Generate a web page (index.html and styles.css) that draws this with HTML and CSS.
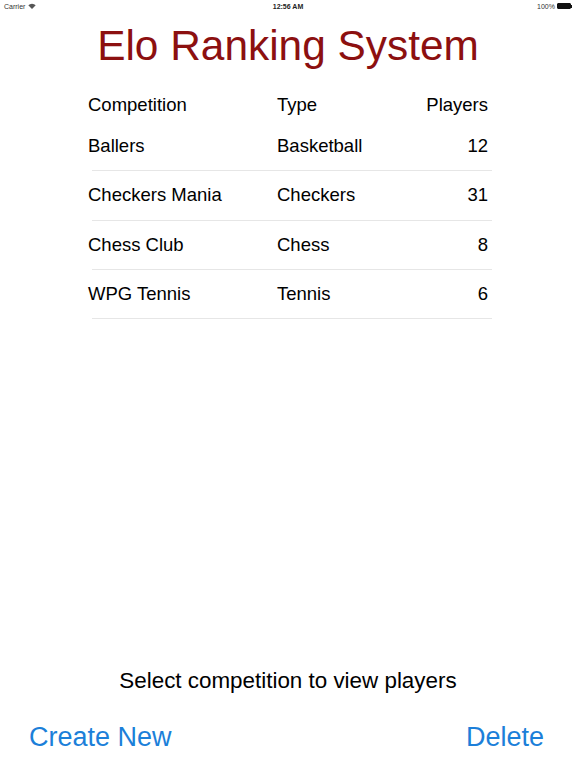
FILE: index.html
```html
<!DOCTYPE html>
<html>
<head>
<meta charset="utf-8">
<link rel="stylesheet" href="styles.css">
</head>
<body>
<div class="screen">
  <div class="status">
    <div class="st-left">Carrier
      <svg class="wifi" width="8" height="6" viewBox="0 0 8 6"><path d="M4 6 L0.3 2.2 A5.3 5.3 0 0 1 7.7 2.2 Z" fill="#555"/></svg>
    </div>
    <div class="st-center">12:56 AM</div>
    <div class="st-right">100% <span class="batt"><span class="batt-fill"></span></span><span class="batt-tip"></span></div>
  </div>
  <h1 class="title">Elo Ranking System</h1>
  <div class="table">
    <div class="row head"><span class="c1">Competition</span><span class="c2">Type</span><span class="c3">Players</span></div>
    <div class="row item"><span class="c1">Ballers</span><span class="c2">Basketball</span><span class="c3">12</span></div>
    <div class="row item"><span class="c1">Checkers Mania</span><span class="c2">Checkers</span><span class="c3">31</span></div>
    <div class="row item"><span class="c1">Chess Club</span><span class="c2">Chess</span><span class="c3">8</span></div>
    <div class="row item"><span class="c1">WPG Tennis</span><span class="c2">Tennis</span><span class="c3">6</span></div>
  </div>
  <div class="spacer"></div>
  <div class="hint">Select competition to view players</div>
  <div class="actions"><span class="btn">Create New</span><span class="btn">Delete</span></div>
</div>
</body>
</html>
```
FILE: styles.css
```css
* { box-sizing: border-box; }
html, body { margin: 0; padding: 0; background: #fff; }
body { font-family: "Liberation Sans", Arial, sans-serif; color: #000; }
.screen { width: 576px; height: 768px; display: flex; flex-direction: column; }
.status { height: 12px; display: flex; align-items: center; justify-content: space-between; font-size: 7px; color: #333; padding: 0 4px; }
.st-left { display: flex; align-items: center; gap: 3px; width: 80px; }
.st-center { font-weight: bold; color: #222; }
.st-right { display: flex; align-items: center; justify-content: flex-end; width: 80px; gap: 2px; }
.batt { width: 14px; height: 6px; border: 1px solid #111; border-radius: 1px; display: inline-block; }
.batt-fill { display: block; width: 100%; height: 100%; background: #111; }
.batt-tip { width: 1px; height: 3px; background: #111; margin-left: -2px; }
.title { margin: 9px 0 0; text-align: center; font-weight: normal; font-size: 42.4px; line-height: 50px; color: #8c1010; }
.table { margin: 16.5px 84px 0 88px; }
.row { display: flex; align-items: center; font-size: 18.5px; }
.head { height: 34.5px; }
.item { height: 49.3px; border-bottom: 1px solid #e6e6e6; margin-left: 4px; }
.item .c1 { margin-left: -4px; }
.c1 { width: 189px; }
.c2 { flex: 1; }
.c3 { text-align: right; padding-right: 4px; }
.spacer { flex: 1; }
.hint { text-align: center; font-size: 22.4px; line-height: 28px; margin-bottom: 27px; }
.actions { display: flex; justify-content: space-between; padding: 0 32px 0 29px; height: 46px; font-size: 27px; color: #1c7fd9; }
```
